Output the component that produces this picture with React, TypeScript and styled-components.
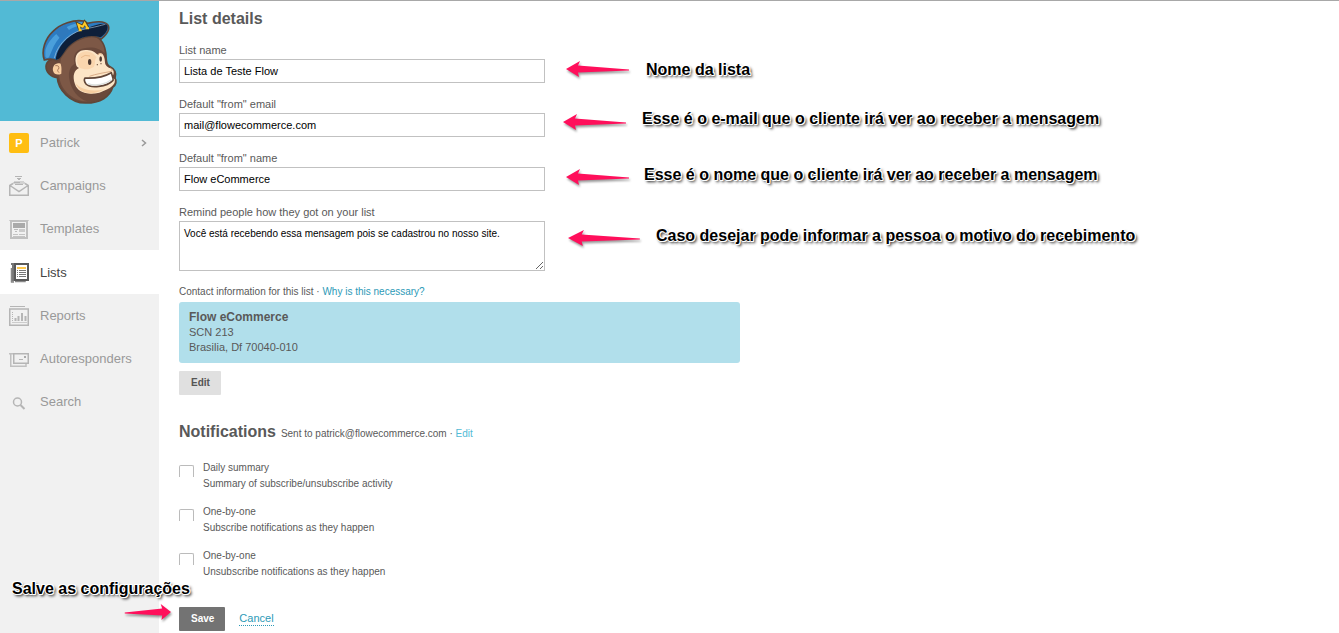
import React from "react";
import styled, { createGlobalStyle } from "styled-components";

const Global = createGlobalStyle`
  *, *::before, *::after { box-sizing: border-box; }
  body { margin: 0; background: #fff; color: #595959; font: 11px/16px "Liberation Sans", Arial, sans-serif; }
  h1, h2, p { margin: 0; }
`;

const Page = styled.div`
  display: grid;
  grid-template-columns: 159px 1fr;
  min-height: 100vh;
  border-top: 1px solid #a8a8a8;
`;

const Sidebar = styled.aside`
  background: #f1f1f1;
`;

const Brand = styled.a`
  display: flex;
  justify-content: center;
  height: 120px;
  background: #52bad5;
`;

const NavItem = styled.a<{ $active?: boolean }>`
  display: grid;
  grid-template-columns: 20px 1fr 8px;
  align-items: center;
  column-gap: 11px;
  height: ${(p) => (p.$active ? 44 : 43)}px;
  padding: ${(p) => (p.$active ? 2 : 1)}px 11px 0 9px;
  background: ${(p) => (p.$active ? "#fff" : "transparent")};
  color: ${(p) => (p.$active ? "#444" : "#999")};
  font-size: 13px;
  line-height: 16px;
  text-decoration: none;
`;

const Avatar = styled.span`
  height: 20px;
  border-radius: 2px;
  background: #ffbe12;
  color: #fff;
  font-size: 11px;
  font-weight: bold;
  line-height: 20px;
  text-align: center;
`;

const Main = styled.main`
  padding: 8px 20px 0;
`;

const Title = styled.h1`
  margin-bottom: 13px;
  font-size: 16px;
  line-height: 20px;
`;

const Field = styled.div`
  position: relative;
  display: flex;
  flex-direction: column;
  max-width: 366px;
  margin-bottom: 13px;
`;

const Label = styled.label`
  margin-bottom: 1px;
  font-size: 11px;
`;

const TextInput = styled.input`
  width: 100%;
  height: 24px;
  padding: 0 4px;
  border: 1px solid #c1c1c1;
  border-radius: 0;
  color: #000;
  font: 11px/16px "Liberation Sans", Arial, sans-serif;
`;

const TextArea = styled.textarea`
  width: 100%;
  height: 50px;
  padding: 4px;
  border: 1px solid #c1c1c1;
  color: #000;
  font: 10px/16px "Liberation Sans", Arial, sans-serif;
`;

const Link = styled.a<{ $light?: boolean }>`
  color: ${(p) => (p.$light ? "#52bad5" : "#2c9ab7")};
  text-decoration: none;
`;

const Caption = styled.p`
  margin-bottom: 2px;
  font-size: 10px;
`;

const Address = styled.address`
  max-width: 561px;
  padding: 7px 10px 8px;
  border-radius: 3px;
  background: #b1dfeb;
  font-size: 11px;
  font-style: normal;
  line-height: 15px;

  strong { display: block; font-size: 12px; line-height: 16px; }
`;

const Button = styled.button<{ $primary?: boolean }>`
  height: 24px;
  padding: 0 11px 0 12px;
  border: 0;
  border-radius: 1px;
  background: ${(p) => (p.$primary ? "#737373" : "#e0e0e0")};
  color: ${(p) => (p.$primary ? "#fff" : "#555")};
  font: bold 10px/16px "Liberation Sans", Arial, sans-serif;
`;

const EditRow = styled.div`
  display: flex;
  margin: 8px 0 27px;
`;

const SectionHead = styled.div`
  display: flex;
  align-items: baseline;
  gap: 5px;
  margin-bottom: 18px;
  font-size: 10px;

  h2 { font-size: 16px; line-height: 20px; }
`;

const Option = styled.div`
  display: flex;
  gap: 9px;
  margin-bottom: 12px;
`;

const Tick = styled.input`
  appearance: none;
  width: 15px;
  height: 12px;
  margin: 5px 0 0;
  border: 1px solid #bbb;
  border-bottom: 0;
  border-radius: 2px 2px 0 0;
`;

const OptionLabel = styled.label`
  display: flex;
  flex-direction: column;
  font-size: 10px;
`;

const Actions = styled.div`
  position: relative;
  display: flex;
  align-items: center;
  gap: 14px;
  padding-top: 15px;
`;

const Cancel = styled(Link)`
  border-bottom: 1px dotted #2c9ab7;
  line-height: 14px;
  margin-bottom: 2px;
`;

const Note = styled.p<{ $x: number; $y: number }>`
  position: absolute;
  left: ${(p) => p.$x}px;
  top: ${(p) => p.$y}px;
  color: #000;
  font-size: 16px;
  font-weight: bold;
  line-height: 20px;
  white-space: nowrap;
  text-shadow: 1px 0 #fff, -1px 0 #fff, 0 1px #fff, 0 -1px #fff, 1px 1px #fff,
    -1px -1px #fff, 1px -1px #fff, 2px 2px 3px #000;
`;

const Pointer = styled.svg<{ $x: number; $y: number }>`
  position: absolute;
  left: ${(p) => p.$x}px;
  top: ${(p) => p.$y}px;
  overflow: visible;
  filter: drop-shadow(1px 2px 1px rgba(0, 0, 0, 0.4));
`;

type Spot = { x: number; y: number };

function Arrow({ x, y, width = 64, right }: Spot & { width?: number; right?: boolean }) {
  return (
    <Pointer $x={x} $y={y} width={width} height={16} viewBox="0 0 64 16" preserveAspectRatio="none" aria-hidden="true">
      <path
        fill="#ff0f5b"
        transform={right ? "matrix(-1 0 0 1 64 0)" : undefined}
        d="M0 8 L14 0 L12 4.500 L63 8.500 V9.500 L12 11.500 L13 16 Z"
      />
    </Pointer>
  );
}

function Monkey() {
  return (
    <svg width="100" height="120" viewBox="0 3 300 360" role="img" aria-label="MailChimp">
      <path d="M83 176 C67 172 49 183 48 199 C48 217 62 231 82 233 C84 268 120 310 168 309 C211 309 240 290 248 262 C259 254 260 242 255 235 C261 217 252 206 238 199 C225 192 230 172 227 157 C222 122 206 107 176 103 L104 136 Z" fill="#6a493b" stroke="#604638" strokeWidth="5" />
      <path d="M103 150 C120 118 157 102 184 107 C214 114 224 138 224 160 C206 140 171 137 145 151 C130 162 130 179 134 191 C120 199 114 216 118 238 C122 267 145 298 172 304 C132 305 92 272 88 230 C89 191 92 171 103 150Z" fill="#7d5846" />
      <path d="M138 193 C131 162 148 149 169 150 C187 149 197 159 204 165 C216 150 225 170 225 188 C226 199 237 203 245 206 C254 211 252 224 246 231 L254 238 C258 253 244 266 208 278 C174 287 143 278 135 253 C126 226 133 211 147 204 C141 201 139 199 138 193Z" fill="#fce5c6" />
      <path d="M142 190 C139 164 151 156 169 154 C184 155 192 163 200 172 C192 179 198 192 191 201 C174 212 160 207 150 204Z" fill="#fad6ae" />
      <path d="M137 250 C150 268 187 277 222 268 C207 277 192 281 178 280 C157 278 142 267 137 250Z" fill="#f6cda0" />
      <path d="M165 234 C187 235 222 231 244 218 C246 227 251 236 249 241 C230 262 181 265 168 252 Q160 241 165 234Z" fill="#fff" stroke="#604638" strokeWidth="5" strokeLinejoin="round" />
      <path d="M173 251 C198 259 227 253 244 239" fill="none" stroke="#dce1df" strokeWidth="4" />
      <path d="M178 229 C198 222 222 218 240 215 C249 213 248 208 240 203" fill="none" stroke="#c78f68" strokeWidth="2" />
      <ellipse cx="179" cy="186" rx="5" ry="9" fill="#4d3930" />
      <ellipse cx="212" cy="177" rx="4" ry="8" fill="#4d3930" />
      <path d="M153 173 Q164 162 180 168 M202 164 Q211 157 215 163" fill="none" stroke="#eaba8b" strokeWidth="3" />
      <circle cx="202" cy="194" r="2" fill="#6a4a38" />
      <circle cx="213" cy="191" r="2" fill="#6a4a38" />
      <path d="M92 191 C78 185 66 198 69 212 C72 224 84 226 94 221 C94 213 96 203 92 191Z" fill="#f8cea1" />
      <path d="M76 197 Q89 195 86 207 Q79 209 87 218" fill="none" stroke="#a77859" strokeWidth="3" />
      <path d="M43 180 C33 153 45 116 69 94 C91 71 131 58 161 63 Q168 65 172 70 C194 64 224 62 233 74 C242 86 231 102 214 117 C184 99 142 116 117 139 C99 157 92 181 79 182 C67 174 54 177 43 180Z" fill="#2b7cc3" stroke="#604638" strokeWidth="5" />
      <path d="M46 151 C56 116 95 78 154 66 Q162 68 160 74 C112 81 80 114 66 151 L57 172 Q50 177 46 170 Z" fill="#4a9fdb" />
      <path d="M86 83 L105 75 L121 95 L94 119 L78 101Z" fill="#2f79bd" />
      <path d="M77 179 C83 130 128 94 174 83 C198 75 226 65 232 77 C237 91 220 107 211 112 C177 101 143 113 116 139 C98 158 92 181 77 179Z" fill="#0e1f39" />
      <path d="M73 174 C84 126 126 94 173 85 C203 80 219 74 226 73" fill="none" stroke="#a8c4db" strokeWidth="2" />
      <path d="M150 90 L144 73 L158 79 L164 68 L173 83" fill="none" stroke="#54401e" strokeWidth="10" />
      <path d="M150 90 L145 74 L158 80 L164 69 L172 83 M146 91 H155 M167 85 H177" fill="none" stroke="#ffca27" strokeWidth="6" />
    </svg>
  );
}

type IconName = "campaigns" | "templates" | "lists" | "reports" | "auto" | "search";

function NavIcon({ name }: { name: IconName }) {
  const shapes: Record<IconName, React.ReactNode> = {
    campaigns: (
      <>
        <path d="M6 0.500 H13 M8 2.500 H12 M9 3.500 H11" strokeWidth="1" />
        <path d="M4 8 V6 H5 V5 H15 V6 H16 V8 Z" fill="#d2d2d2" stroke="none" />
        <path d="M5 6.500 H11 M6 8.500 H14" strokeWidth="1" />
        <path d="M4 7.500 L0.750 9.500 V19.250 H19.250 V9.500 L16 7.500 M1 9.500 L10 15.500 L19 9.500" strokeWidth="1.500" />
      </>
    ),
    templates: (
      <>
        <path d="M0 1.500 H20" stroke="#d0d0d0" strokeWidth="1" />
        <rect x="2" y="2" width="16" height="17" stroke="#c0c0c0" />
        <rect x="4" y="4" width="12" height="5" fill="#aaa" stroke="none" />
        <rect x="10" y="10" width="6" height="3" fill="#ccc" stroke="none" />
        <path d="M5 10.500 H9 M6 12.500 H8" stroke="#bbb" strokeWidth="1" />
        <path d="M4 15.500 H9 M10 15.500 H16 M4 17.500 H16" stroke="#c4c4c4" strokeWidth="1" />
      </>
    ),
    lists: (
      <>
        <path d="M2 1 H6 M4 1 V18.500" stroke="#777" />
        <path d="M2.500 5 V19.500 M2 19 H5 M6 18.500 H16 V17" stroke="#888" strokeWidth="1.500" />
        <rect x="6" y="1" width="13" height="16" fill="#fff" stroke="#595959" />
        <rect x="8" y="4" width="9" height="2" fill="#ffc94e" stroke="none" />
        <path d="M8 7.500 H9 M8 9.500 H9 M8 11.500 H9 M8 13.500 H9 M10 7.500 H17 M10 9.500 H17 M10 11.500 H17 M10 13.500 H17" stroke="#777" strokeWidth="1" />
      </>
    ),
    reports: (
      <>
        <path d="M1 0.500 H16" strokeWidth="1" />
        <rect x="0.750" y="3" width="18.500" height="16.250" strokeWidth="1.500" />
        <path d="M3.500 6 V16" strokeWidth="1" strokeDasharray="1 1" />
        <path d="M6.500 15 V12 M9.500 15 V10 M13 15 V7 M16.500 15 V10" />
        <path d="M3 16.500 H18" stroke="#ccc" strokeWidth="1" />
      </>
    ),
    auto: (
      <>
        <path d="M0 4.750 H4 M1.750 5 V17.250 H17 V15" stroke="#c0c0c0" strokeWidth="1.500" />
        <rect x="4.750" y="4.750" width="14.500" height="9.500" strokeWidth="1.500" />
        <path d="M10 10.500 H14" strokeWidth="1" />
        <rect x="15" y="7" width="2" height="2" fill="#aaa" stroke="none" />
      </>
    ),
    search: (
      <>
        <circle cx="8.500" cy="10" r="4" strokeWidth="1.500" />
        <path d="M11.500 13 L15.500 17" />
      </>
    ),
  };
  return (
    <svg width="20" height="20" viewBox="0 0 20 20" stroke="#b5b5b5" strokeWidth="2" fill="none" aria-hidden="true">
      {shapes[name]}
    </svg>
  );
}

const nav: { label: string; icon: IconName }[] = [
  { label: "Campaigns", icon: "campaigns" },
  { label: "Templates", icon: "templates" },
  { label: "Lists", icon: "lists" },
  { label: "Reports", icon: "reports" },
  { label: "Autoresponders", icon: "auto" },
  { label: "Search", icon: "search" },
];

const fields: { id: string; label: string; value: string; note: string; arrow: Spot; text: Spot; long?: boolean }[] = [
  { id: "name", label: "List name", value: "Lista de Teste Flow", note: "Nome da lista", arrow: { x: 387, y: 19 }, text: { x: 467, y: 18 } },
  { id: "email", label: 'Default "from" email', value: "mail@flowecommerce.com", note: "Esse é o e-mail que o cliente irá ver ao receber a mensagem", arrow: { x: 384, y: 18 }, text: { x: 463, y: 13 } },
  { id: "from", label: 'Default "from" name', value: "Flow eCommerce", note: "Esse é o nome que o cliente irá ver ao receber a mensagem", arrow: { x: 387, y: 19 }, text: { x: 465, y: 15 } },
  { id: "remind", label: "Remind people how they got on your list", value: "Você está recebendo essa mensagem pois se cadastrou no nosso site.", note: "Caso desejar pode informar a pessoa o motivo do recebimento", arrow: { x: 389, y: 26 }, text: { x: 477, y: 22 }, long: true },
];

const options = [
  { id: "daily", label: "Daily summary", hint: "Summary of subscribe/unsubscribe activity" },
  { id: "sub", label: "One-by-one", hint: "Subscribe notifications as they happen" },
  { id: "unsub", label: "One-by-one", hint: "Unsubscribe notifications as they happen" },
];

export default function App() {
  return (
    <>
      <Global />
      <Page>
        <Sidebar>
          <Brand href="#home"><Monkey /></Brand>
          <nav>
            <NavItem href="#account">
              <Avatar>P</Avatar>
              Patrick
              <svg width="8" height="10" viewBox="0 0 8 10" aria-hidden="true">
                <path d="M2 2 L5.500 5 L2 8" fill="none" stroke="#999" strokeWidth="1.500" />
              </svg>
            </NavItem>
            {nav.map((n) => (
              <NavItem key={n.icon} href={`#${n.icon}`} $active={n.icon === "lists"}>
                <NavIcon name={n.icon} />
                {n.label}
              </NavItem>
            ))}
          </nav>
        </Sidebar>
        <Main>
          <Title>List details</Title>
          {fields.map((f) => (
            <Field key={f.id}>
              <Label htmlFor={f.id}>{f.label}</Label>
              {f.long ? <TextArea id={f.id} defaultValue={f.value} /> : <TextInput id={f.id} defaultValue={f.value} />}
              <Arrow x={f.arrow.x} y={f.arrow.y} width={f.long ? 73 : 64} />
              <Note $x={f.text.x} $y={f.text.y}>{f.note}</Note>
            </Field>
          ))}
          <Caption>
            Contact information for this list · <Link href="#why">Why is this necessary?</Link>
          </Caption>
          <Address>
            <strong>Flow eCommerce</strong>
            SCN 213
            <br />
            Brasilia, Df 70040-010
          </Address>
          <EditRow><Button type="button">Edit</Button></EditRow>
          <SectionHead>
            <h2>Notifications</h2>
            <span>Sent to patrick@flowecommerce.com · <Link $light href="#edit">Edit</Link></span>
          </SectionHead>
          {options.map((o) => (
            <Option key={o.id}>
              <Tick type="checkbox" id={o.id} />
              <OptionLabel htmlFor={o.id}>
                <span>{o.label}</span>
                <span>{o.hint}</span>
              </OptionLabel>
            </Option>
          ))}
          <Actions>
            <Button type="submit" $primary>Save</Button>
            <Cancel href="#cancel">Cancel</Cancel>
            <Note $x={-167} $y={-13}>Salve as configurações</Note>
            <Arrow x={-55} y={12} width={47} right />
          </Actions>
        </Main>
      </Page>
    </>
  );
}
